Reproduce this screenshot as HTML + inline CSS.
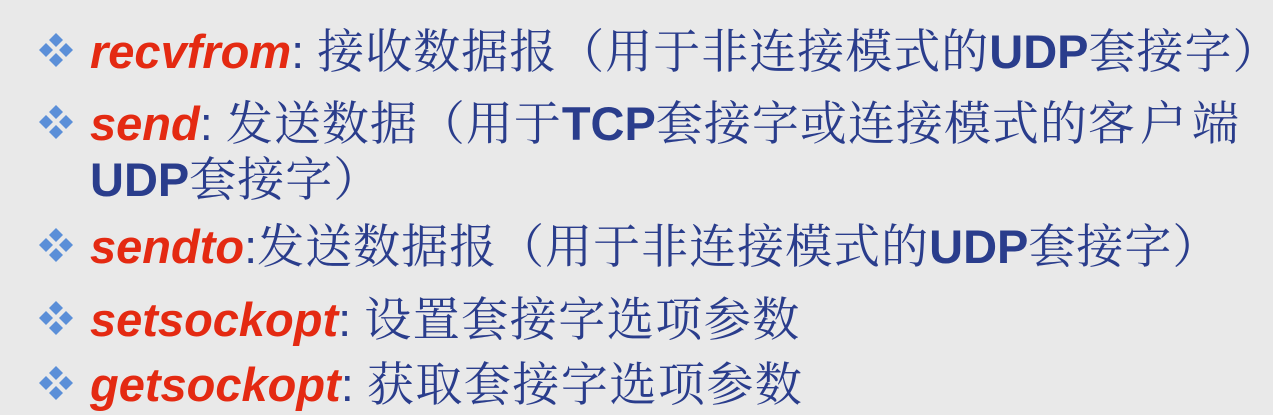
<!DOCTYPE html>
<html><head><meta charset="utf-8"><style>
html,body{margin:0;padding:0;}
body{width:1273px;height:412px;background:#e9e9e9;position:relative;overflow:hidden;
font-family:"Liberation Sans","Noto Serif CJK SC",serif;color:#2a3d8c;}
.l{position:absolute;left:90px;font-size:47px;line-height:50px;white-space:nowrap;}
.k{font-family:"Liberation Sans",sans-serif;font-weight:bold;font-style:italic;color:#e42a12;}
.c{font-family:"Noto Serif CJK SC",serif;letter-spacing:1px;}
.b{font-family:"Liberation Sans",sans-serif;font-weight:bold;}
.bul{position:absolute;left:38px;width:36px;height:36px;}
</style></head><body>
<svg width="0" height="0" style="position:absolute"><defs><g id="d" fill="#5b8fd8"><polygon points="18,1 25,8 18,15 11,8"/><polygon points="8,11 15,18 8,25 1,18"/><polygon points="28,11 35,18 28,25 21,18"/><polygon points="18,21 25,28 18,35 11,28"/></g></defs></svg>
<svg class="bul" style="top:32px"><use href="#d"/></svg>
<div class="l" style="top:24px"><span class="k">recvfrom</span>: <span class="c">接收数据报（用于非连接模式的</span><span class="b">UDP</span><span class="c">套接字）</span></div>
<svg class="bul" style="top:104px"><use href="#d"/></svg>
<div class="l" style="top:96px"><span class="k">send</span>: <span class="c">发送数据（用于</span><span class="b">TCP</span><span class="c">套接字或连接模式的<span style="letter-spacing:5px">客户端</span></span></div>
<div class="l" style="top:152px"><span class="b">UDP</span><span class="c">套接字）</span></div>
<svg class="bul" style="top:227px"><use href="#d"/></svg>
<div class="l" style="top:219px"><span class="k">sendto</span>:<span class="c">发送数据报（用于非连接模式的</span><span class="b">UDP</span><span class="c">套接字）</span></div>
<svg class="bul" style="top:300px"><use href="#d"/></svg>
<div class="l" style="top:292px"><span class="k">setsockopt</span>: <span class="c" style="letter-spacing:1.5px">设置套接字选项参数</span></div>
<svg class="bul" style="top:365px"><use href="#d"/></svg>
<div class="l" style="top:357px"><span class="k">getsockopt</span>: <span class="c" style="letter-spacing:1.5px">获取套接字选项参数</span></div>
</body></html>
